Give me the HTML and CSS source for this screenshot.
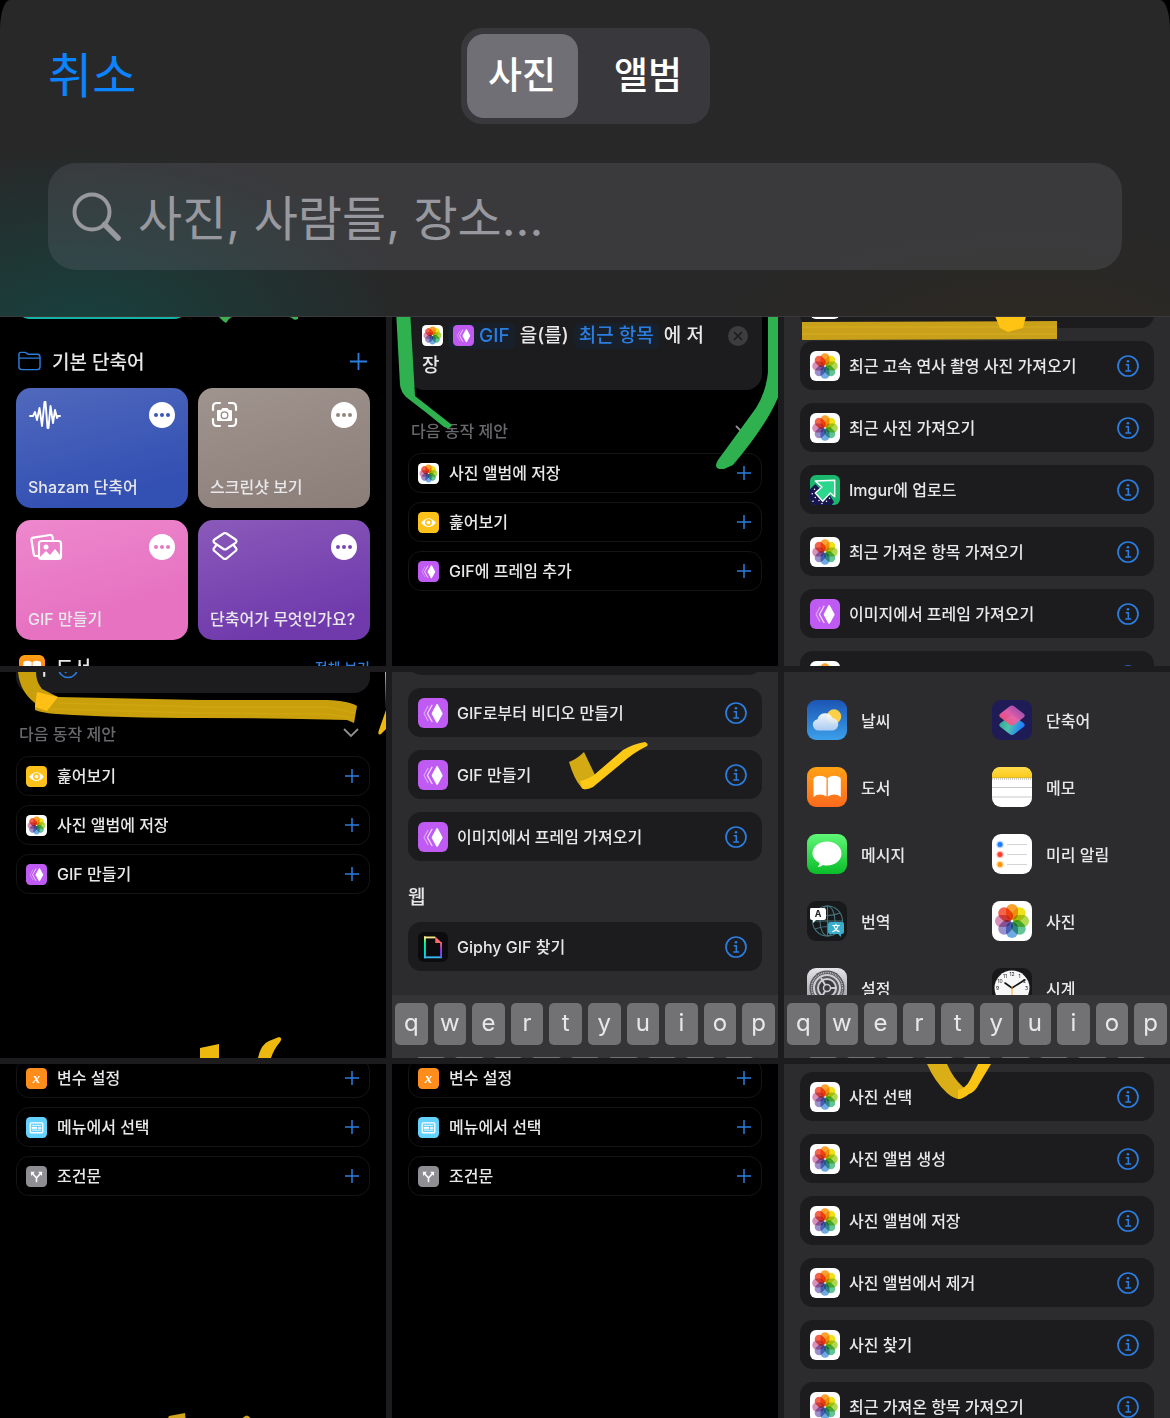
FILE: index.html
```
<!DOCTYPE html>
<html lang="ko">
<head>
    <meta charset="UTF-8">
    <meta name="viewport" content="width=device-width, initial-scale=1.0">
    <title>사진</title>
    <link rel="stylesheet" href="styles.css">
</head>
<body>

<!-- shared icons -->
<svg class="sprite" aria-hidden="true">
    <defs>
        <linearGradient id="g-sky" x2="0" y2="1"><stop stop-color="#1c55b4"/><stop offset="1" stop-color="#3ba0ea"/></linearGradient>
        <linearGradient id="g-cloud" x2="0" y2="1"><stop stop-color="#fff"/><stop offset="1" stop-color="#b4d0f2"/></linearGradient>
        <linearGradient id="g-book" x2="0" y2="1"><stop stop-color="#ffa114"/><stop offset="1" stop-color="#fb6a1e"/></linearGradient>
        <linearGradient id="g-msg" x2="0" y2="1"><stop stop-color="#5ff777"/><stop offset="1" stop-color="#0abc29"/></linearGradient>
        <linearGradient id="g-note" x2="0" y2="1"><stop stop-color="#ffdc4d"/><stop offset="1" stop-color="#fcc917"/></linearGradient>
        <linearGradient id="g-top" x1="0" y1="1" x2="1" y2="0"><stop stop-color="#ff4d5c"/><stop offset=".5" stop-color="#ee5fae"/><stop offset="1" stop-color="#7a4fb8"/></linearGradient>
        <linearGradient id="g-low" y2=".3"><stop stop-color="#2f9d96"/><stop offset=".5" stop-color="#4fc3ab"/><stop offset="1" stop-color="#1f7dff"/></linearGradient>
        <linearGradient id="g-set" x2="0" y2="1"><stop stop-color="#e4e4e9"/><stop offset="1" stop-color="#8e8e93"/></linearGradient>
        <linearGradient id="g-gl" x2="0" y2="1"><stop stop-color="#fff35c"/><stop offset=".3" stop-color="#00ff99"/><stop offset="1" stop-color="#00ccff"/></linearGradient>
        <linearGradient id="g-gr" x2="0" y2="1"><stop stop-color="#ff6666"/><stop offset=".5" stop-color="#9933ff"/><stop offset="1" stop-color="#6157ff"/></linearGradient>
    </defs>

    <symbol id="i-photos" viewBox="0 0 40 40">
        <rect width="40" height="40" rx="8" fill="#fff"/>
        <g class="petals">
            <rect x="14" y="3" width="12" height="16" rx="6" fill="#fba12e"/>
            <rect x="14" y="3" width="12" height="16" rx="6" fill="#f0e11c" transform="rotate(45 20 20)"/>
            <rect x="14" y="3" width="12" height="16" rx="6" fill="#b0d951" transform="rotate(90 20 20)"/>
            <rect x="14" y="3" width="12" height="16" rx="6" fill="#63c595" transform="rotate(135 20 20)"/>
            <rect x="14" y="3" width="12" height="16" rx="6" fill="#70aae2" transform="rotate(180 20 20)"/>
            <rect x="14" y="3" width="12" height="16" rx="6" fill="#9c8fcb" transform="rotate(225 20 20)"/>
            <rect x="14" y="3" width="12" height="16" rx="6" fill="#d890ba" transform="rotate(270 20 20)"/>
            <rect x="14" y="3" width="12" height="16" rx="6" fill="#f2644c" transform="rotate(315 20 20)"/>
        </g>
    </symbol>
    <symbol id="i-gif" viewBox="0 0 40 40">
        <rect width="40" height="40" rx="8" fill="#bf5af2"/>
        <path d="M24.500 8.500q1-.8 2 0l6 11q.5 1 0 2l-6 11q-1 .8-2 0l-6-11q-.5-1 0-2z" fill="#fff"/>
        <path d="M19 9l-6.500 11.500L19 32" fill="none" stroke="#fff" stroke-opacity=".75" stroke-width="1.800"/>
        <path d="M13.500 10.500L8 20.500l5.500 10" fill="none" stroke="#fff" stroke-opacity=".45" stroke-width="1.500"/>
    </symbol>
    <symbol id="i-eye" viewBox="0 0 40 40">
        <rect width="40" height="40" rx="8" fill="#ffc21a"/>
        <path d="M6 20.500Q20 3 34 20.500 20 37 6 20.500z" fill="#fff"/>
        <circle cx="20" cy="20" r="6.500" fill="#ffc21a"/>
        <circle cx="20" cy="20" r="3.500" fill="#fff"/>
    </symbol>
    <symbol id="i-var" viewBox="0 0 40 40">
        <rect width="40" height="40" rx="8" fill="#ff8d1c"/>
        <text x="20" y="29" class="icon-serif">x</text>
    </symbol>
    <symbol id="i-menu" viewBox="0 0 40 40">
        <rect width="40" height="40" rx="8" fill="#64d2ff"/>
        <rect x="8" y="11" width="24" height="19" rx="2" fill="none" stroke="#fff" stroke-width="2.400"/>
        <path d="M11 16h18M11 25h18" stroke="#fff" stroke-width="1.500"/>
        <rect x="11" y="19" width="10" height="3.500" fill="#fff"/>
        <path d="M23 21h6" stroke="#fff" stroke-width="3"/>
    </symbol>
    <symbol id="i-branch" viewBox="0 0 40 40">
        <rect width="40" height="40" rx="8" fill="#8e8e93"/>
        <path d="M20 31V23L12 14M20 23l8-9" fill="none" stroke="#fff" stroke-width="3"/>
        <path d="M9 11l8 0-7 8zM31 11l-8 0 7 8z" fill="#fff"/>
    </symbol>
    <symbol id="i-imgur" viewBox="0 0 40 40">
        <rect width="40" height="40" rx="8" fill="#1bb76e"/>
        <path d="M0 19l7-7 10 10 10 6 5 8-3 4H8q-8 0-8-8z" fill="#17164f"/>
        <g fill="#fff"><circle cx="6" cy="19" r="1"/><circle cx="3" cy="25" r="1"/><circle cx="7" cy="30" r="1"/><circle cx="4" cy="35" r="1"/><circle cx="12" cy="34" r="1"/><circle cx="16" cy="38" r="1"/><circle cx="22" cy="35" r="1"/><circle cx="26" cy="31" r="1"/></g>
        <path d="M7 8l26-1v22l-6-5-10 11L7 24l9-8z" fill="#2bd68d" stroke="#fff" stroke-width="1.800" stroke-linejoin="round"/>
    </symbol>
    <symbol id="i-giphy" viewBox="0 0 40 40">
        <rect width="40" height="40" rx="8" fill="#0c0c0e"/>
        <rect x="8" y="6" width="2.500" height="29" fill="url(#g-gl)"/>
        <rect x="8" y="6" width="15" height="2.500" fill="#f5e98a"/>
        <rect x="8" y="32.500" width="24" height="2.500" fill="#35b8f0"/>
        <rect x="29.500" y="14" width="2.500" height="20" fill="url(#g-gr)"/>
        <path d="M23 6l9 8.500h-9z" fill="#ff6b6b"/>
    </symbol>
    <symbol id="i-weather" viewBox="0 0 40 40">
        <rect width="40" height="40" rx="9" fill="url(#g-sky)"/>
        <circle cx="27" cy="16.500" r="7.200" fill="#fdd04a"/>
        <path d="M11.500 30.500a5.700 5.700 0 0 1-1-11.300 8 8 0 0 1 15-1.200 6.300 6.300 0 0 1 .5 12.500z" fill="url(#g-cloud)" fill-opacity=".93"/>
    </symbol>
    <symbol id="i-shortcuts" viewBox="0 0 40 40">
        <rect width="40" height="40" rx="9" fill="#1e1b57"/>
        <path d="M17.500 16.500q2.500-2 5 0l9 6.500q2.500 2 0 4l-9 7q-2.500 2-5 0l-9-7q-2.500-2 0-4z" fill="url(#g-low)"/>
        <path d="M17.500 6.500q2.500-2 5 0l9 7q2.500 2 0 4l-9 7q-2.500 2-5 0l-9-7q-2.500-2 0-4z" fill="url(#g-top)" fill-opacity=".93"/>
    </symbol>
    <symbol id="i-books" viewBox="0 0 40 40">
        <rect width="40" height="40" rx="9" fill="url(#g-book)"/>
        <path d="M19.500 29.500Q12.500 25.500 6.500 30V12q0-2 2.500-2.500 6-2 10.500 1.500zM20.800 29.500q7-4 13 .5V12q0-2-2.500-2.500-6-2-10.500 1.500z" fill="#fff"/>
    </symbol>
    <symbol id="i-notes" viewBox="0 0 40 40">
        <rect width="40" height="40" rx="9" fill="#fff"/>
        <path d="M0 11V9q0-9 9-9h22q9 0 9 9v2z" fill="url(#g-note)"/>
        <path d="M0 12h40" stroke="#a9a59a" stroke-width="1.200" stroke-dasharray="1 1"/>
        <path d="M0 10.800h40" stroke="#c0a35a" stroke-width=".6"/>
        <path d="M0 20.500h40M0 30h40" stroke="#c9c9cb" stroke-width="1"/>
    </symbol>
    <symbol id="i-messages" viewBox="0 0 40 40">
        <rect width="40" height="40" rx="9" fill="url(#g-msg)"/>
        <path d="M20 7.500c8.300 0 14.500 5.300 14.500 12s-6.200 12-14.500 12q-2 0-4-.5-2.500 2-5.500 2 2-1.500 2-4c-4-2.200-7-5.500-7-9.500 0-6.700 6.200-12 14.500-12z" fill="#fff"/>
    </symbol>
    <symbol id="i-reminders" viewBox="0 0 40 40">
        <rect width="40" height="40" rx="9" fill="#fff"/>
        <g fill-opacity=".3"><circle cx="8" cy="10.500" r="3.800" fill="#1c7cff"/><circle cx="8" cy="20.500" r="3.800" fill="#ff3b30"/><circle cx="8" cy="30.500" r="3.800" fill="#ff9500"/></g>
        <circle cx="8" cy="10.500" r="2.500" fill="#1c7cff"/><circle cx="8" cy="20.500" r="2.500" fill="#ff3b30"/><circle cx="8" cy="30.500" r="2.500" fill="#ff9500"/>
        <path d="M15 10.500h20M15 20.500h20M15 30.500h20" stroke="#d4d4d7" stroke-width="1.200"/>
    </symbol>
    <symbol id="i-translate" viewBox="0 0 40 40">
        <rect width="40" height="40" rx="9" fill="#18191b"/>
        <g fill="none" stroke="#47747e" stroke-width="1.100">
            <circle cx="20.500" cy="20" r="15"/><ellipse cx="20.500" cy="20" rx="7.500" ry="15"/>
            <path d="M20.500 5v30M5.500 20h30M8 12q12.500 5 25 0M8 28q12.500-5 25 0"/>
        </g>
        <path d="M4 7h13q2 0 2 2v8q0 2-2 2H9l-3 3v-3H5q-2 0-2-2V9q0-2 1-2z" fill="#fff"/>
        <text x="11" y="16" class="icon-latin">A</text>
        <path d="M23 21h12q2 0 2 2v8q0 2-2 2h-1v3l-3-3h-8q-2 0-2-2v-8q0-2 2-2z" fill="#39aecb"/>
        <text x="29" y="30" class="icon-hanja">文</text>
    </symbol>
    <symbol id="i-settings" viewBox="0 0 40 40">
        <rect width="40" height="40" rx="9" fill="url(#g-set)"/>
        <circle cx="20" cy="20" r="17.500" fill="#56565b"/>
        <circle cx="20" cy="20" r="15.500" fill="none" stroke="#c0c0c6" stroke-width="1.500" stroke-dasharray="1 .8"/>
        <circle cx="20" cy="20" r="13" fill="none" stroke="#cdcdd3" stroke-width="2"/>
        <circle cx="20" cy="20" r="9" fill="#3a3a3e" stroke="#cdcdd3" stroke-width="2"/>
        <path d="M20 20h10M20 20l-6-10M20 20l-6 10" stroke="#cdcdd3" stroke-width="2"/>
        <circle cx="20" cy="20" r="3.500" fill="#3a3a3e" stroke="#cdcdd3" stroke-width="1.500"/>
    </symbol>
    <symbol id="i-clock" viewBox="0 0 40 40">
        <rect width="40" height="40" rx="9" fill="#18181a"/>
        <circle cx="20" cy="20" r="17.500" fill="#f7f7f7"/>
        <g class="icon-digits">
            <text x="20" y="7.500">12</text><text x="27.500" y="9.500">1</text><text x="32.500" y="15">2</text><text x="34.500" y="22">3</text>
            <text x="13" y="9.500">11</text><text x="8" y="15">10</text><text x="5.500" y="22">9</text>
        </g>
        <path d="M13 15l7 5 12.500-8" fill="none" stroke="#111" stroke-width="1.600" stroke-linecap="round"/>
        <path d="M20 18v16" stroke="#ff9f0a" stroke-width=".9"/>
    </symbol>
    <symbol id="i-info" viewBox="0 0 22 22">
        <circle cx="11" cy="11" r="10" fill="none" stroke="#2b7de0" stroke-width="1.700"/>
        <circle cx="11" cy="6.200" r="1.300" fill="#2b7de0"/>
        <path d="M8.700 9.800h2.600v6M8.300 16h5.800" fill="none" stroke="#2b7de0" stroke-width="1.500"/>
    </symbol>
    <symbol id="i-plus" viewBox="0 0 14 14">
        <path d="M7 0v14M0 7h14" stroke="#2b7de0" stroke-width="1.500"/>
    </symbol>
    <symbol id="i-chevron" viewBox="0 0 16 10">
        <path d="M1 1l7 7 7-7" fill="none" stroke="#8e8e93" stroke-width="1.800"/>
    </symbol>
    <symbol id="i-more" viewBox="0 0 26 26">
        <circle cx="13" cy="13" r="13" fill="#fff"/>
        <g fill="currentColor"><circle cx="7" cy="13" r="2"/><circle cx="13" cy="13" r="2"/><circle cx="19" cy="13" r="2"/></g>
    </symbol>
</svg>

<header class="picker-header">
    <div class="toolbar">
        <button class="cancel">취소</button>
        <div class="segmented">
            <input type="radio" name="view" id="view-photos" checked>
            <label for="view-photos">사진</label>
            <input type="radio" name="view" id="view-albums">
            <label for="view-albums">앨범</label>
        </div>
    </div>
    <div class="search">
        <svg class="search-icon" viewBox="0 0 50 50" aria-hidden="true">
            <circle cx="20" cy="20" r="17.500" fill="none" stroke="#98989f" stroke-width="4"/>
            <path d="M32.500 32.500L46 46" stroke="#98989f" stroke-width="5.500" stroke-linecap="round"/>
        </svg>
        <input type="search" aria-label="사진, 사람들, 장소..." placeholder="사진, 사람들, 장소...">
    </div>
</header>

<main class="gallery">

    <section class="tile">
        <div class="shortcut-cut"></div>
        <div class="folder">
            <svg class="folder-icon" viewBox="0 0 24 20"><path d="M1 5V3q0-2 2-2h4q1 0 2 1t2 1h9q3 0 3 3v10q0 3-3 3H4q-3 0-3-3zM1 7h22" fill="none" stroke="#2b7de0" stroke-width="1.500"/></svg>
            <h2>기본 단축어</h2>
            <button class="icon-button" aria-label="추가"><svg class="plus-large"><use href="#i-plus"/></svg></button>
        </div>
        <div class="shortcuts">
            <div class="shortcut blue">
                <div class="shortcut-top">
                    <svg class="glyph" viewBox="0 0 32 30"><path d="M2 16h3l2-4 2 8 2.500-12 2.500 18L16.500 2l1 0 2 26 1 0L22.500 6l2.500 17 2-13 2 8 1-2h2" fill="none" stroke="#fff" stroke-width="1.900" stroke-linejoin="round" stroke-linecap="round"/></svg>
                    <button class="icon-button" aria-label="더 보기"><svg class="more"><use href="#i-more"/></svg></button>
                </div>
                <span>Shazam 단축어</span>
            </div>
            <div class="shortcut taupe">
                <div class="shortcut-top">
                    <svg class="glyph" viewBox="0 0 32 30"><path d="M3 10V7q0-4 4-4h3M19 3h3q4 0 4 4v3M26 19v3q0 4-4 4h-3M10 26H7q-4 0-4-4v-3" fill="none" stroke="#fff" stroke-width="2.200" stroke-linecap="round"/><path d="M9 10h2l1.500-2h5L19 10h2q1 0 1 1v9q0 1-1 1H8q-1 0-1-1v-9q0-1 1-1z" fill="#fff"/><circle cx="14.500" cy="15.200" r="3.300" fill="none" stroke="#968984" stroke-width="1.300"/></svg>
                    <button class="icon-button" aria-label="더 보기"><svg class="more"><use href="#i-more"/></svg></button>
                </div>
                <span>스크린샷 보기</span>
            </div>
            <div class="shortcut pink">
                <div class="shortcut-top">
                    <svg class="glyph" viewBox="0 0 32 30"><path d="M10 24H8q-2 0-2.300-2L3.500 8q-.3-2 1.700-2.400L22 3q2-.3 2.500 1.700l.5 3" fill="none" stroke="#fff" stroke-width="2.200"/><rect x="11" y="9" width="22" height="18" rx="2.500" fill="none" stroke="#fff" stroke-width="2.200"/><circle cx="18" cy="15" r="2.500" fill="#fff"/><path d="M12 25l6-6 4 4 5-6 5 6v3H12z" fill="#fff"/></svg>
                    <button class="icon-button" aria-label="더 보기"><svg class="more"><use href="#i-more"/></svg></button>
                </div>
                <span>GIF 만들기</span>
            </div>
            <div class="shortcut violet">
                <div class="shortcut-top">
                    <svg class="glyph" viewBox="0 0 32 30"><g fill="none" stroke="#fff" stroke-width="2.200"><path d="M13.500 1.500q1.500-1 3 0l9 6q2 1.500 0 3.500l-9 6q-1.500 1-3 0l-9-6q-2-2 0-3.500z"/><path d="M6.500 13l-2 2.500q-2 2 0 3.500l9 7.500q1.500 1 3 0l9-7.500q2-1.500 0-3.500l-2-2.500"/></g></svg>
                    <button class="icon-button" aria-label="더 보기"><svg class="more"><use href="#i-more"/></svg></button>
                </div>
                <span>단축어가 무엇인가요?</span>
            </div>
        </div>
        <div class="app-section">
            <svg class="book"><use href="#i-books"/></svg>
            <h2>도서</h2>
            <a href="#">전체 보기</a>
        </div>
        <svg class="marks" viewBox="0 0 386 386"><path d="M219 30h13v7l-3 2-3 4-3-2-4-4zM287 30h11v9q-4 2-6-1l-5-2z" fill="#3fae53"/></svg>
    </section>

    <section class="tile">
        <div class="action">
            <p>
                <svg class="icon-small"><use href="#i-photos"/></svg>
                <span class="token"><svg class="icon-small"><use href="#i-gif"/></svg>GIF</span>
                을(를)
                <span class="token">최근 항목</span>
                에 저장
            </p>
            <button class="icon-button close" aria-label="삭제"><svg viewBox="0 0 20 20"><circle cx="10" cy="10" r="10" fill="#3d3d40"/><path d="M6 6l8 8M14 6l-8 8" stroke="#1c1c1e" stroke-width="1.600"/></svg></button>
        </div>
        <div class="suggest-head"><h3>다음 동작 제안</h3><svg class="chevron"><use href="#i-chevron"/></svg></div>
        <ul class="suggestions">
            <li><svg class="icon-small"><use href="#i-photos"/></svg><span>사진 앨범에 저장</span><button class="icon-button" aria-label="추가"><svg class="plus"><use href="#i-plus"/></svg></button></li>
            <li><svg class="icon-small"><use href="#i-eye"/></svg><span>훑어보기</span><button class="icon-button" aria-label="추가"><svg class="plus"><use href="#i-plus"/></svg></button></li>
            <li><svg class="icon-small"><use href="#i-gif"/></svg><span>GIF에 프레임 추가</span><button class="icon-button" aria-label="추가"><svg class="plus"><use href="#i-plus"/></svg></button></li>
        </ul>
        <svg class="marks" viewBox="0 0 386 386">
            <path d="M4 30L8 105q1 7 6 12l22 17 16 13q6 3 8-2L23 116 18 30zM376 30v62q-2 20-12 36-16 22-38 52-6 10 6 9l9-4q34-40 46-70V30z" fill="#2fb14f"/>
        </svg>
    </section>

    <section class="tile gray">
        <ul class="actions from-above">
            <li><svg class="icon"><use href="#i-photos"/></svg><span></span><button class="icon-button" aria-label="정보"><svg class="info"><use href="#i-info"/></svg></button></li>
            <li><svg class="icon"><use href="#i-photos"/></svg><span>최근 고속 연사 촬영 사진 가져오기</span><button class="icon-button" aria-label="정보"><svg class="info"><use href="#i-info"/></svg></button></li>
            <li><svg class="icon"><use href="#i-photos"/></svg><span>최근 사진 가져오기</span><button class="icon-button" aria-label="정보"><svg class="info"><use href="#i-info"/></svg></button></li>
            <li><svg class="icon"><use href="#i-imgur"/></svg><span>Imgur에 업로드</span><button class="icon-button" aria-label="정보"><svg class="info"><use href="#i-info"/></svg></button></li>
            <li><svg class="icon"><use href="#i-photos"/></svg><span>최근 가져온 항목 가져오기</span><button class="icon-button" aria-label="정보"><svg class="info"><use href="#i-info"/></svg></button></li>
            <li><svg class="icon"><use href="#i-gif"/></svg><span>이미지에서 프레임 가져오기</span><button class="icon-button" aria-label="정보"><svg class="info"><use href="#i-info"/></svg></button></li>
            <li><svg class="icon"><use href="#i-photos"/></svg><span></span><button class="icon-button" aria-label="정보"><svg class="info"><use href="#i-info"/></svg></button></li>
        </ul>
        <svg class="marks" viewBox="0 0 386 386">
            <path d="M18 42l255-1v18l-255 1z" fill="#c9a01a"/>
            <path d="M18 47h255M18 54h255" stroke="#d0a61c" stroke-width="2"/>
            <path d="M211 36h31l-3 12-15 4-8-4z" fill="#ffc314"/>
        </svg>
    </section>

    <section class="tile">
        <div class="action cut">
            <p>기<svg class="arrow-circle" viewBox="0 0 22 22"><circle cx="11" cy="11" r="9.500" fill="none" stroke="#2b7de0" stroke-width="1.600"/><path d="M8 16l5-5-5-5" fill="none" stroke="#2b7de0" stroke-width="1.600"/></svg></p>
        </div>
        <div class="suggest-head"><h3>다음 동작 제안</h3><svg class="chevron"><use href="#i-chevron"/></svg></div>
        <ul class="suggestions">
            <li><svg class="icon-small"><use href="#i-eye"/></svg><span>훑어보기</span><button class="icon-button" aria-label="추가"><svg class="plus"><use href="#i-plus"/></svg></button></li>
            <li><svg class="icon-small"><use href="#i-photos"/></svg><span>사진 앨범에 저장</span><button class="icon-button" aria-label="추가"><svg class="plus"><use href="#i-plus"/></svg></button></li>
            <li><svg class="icon-small"><use href="#i-gif"/></svg><span>GIF 만들기</span><button class="icon-button" aria-label="추가"><svg class="plus"><use href="#i-plus"/></svg></button></li>
        </ul>
        <svg class="marks" viewBox="0 0 386 386">
            <path d="M18 0h18q0 10 6 17l16 8 142 3h127q22 1 30 6l-3 17-7-3q-70-2-147-2-80 0-143-4-14-1-22-4v-7Q20 20 18 0z" fill="#c99f0c"/>
            <path d="M58 31l142 4h127l28 6M50 37l150 4 127 1 26 4" fill="none" stroke="#d0a610" stroke-width="1.500"/>
            <path d="M37 20l21 5-11 14-12-4z" fill="#ffbf14"/>
            <path d="M387 0h-2l1 38-7 20q-2 6 2 4l6-6zM200 376l19-4v14h-19zM258 386q3-14 11-17l10-4q4 1 1 5-6 7-9 16z" fill="#eeb90f"/>
        </svg>
    </section>

    <section class="tile gray">
        <ul class="actions edge">
            <li></li>
            <li><svg class="icon"><use href="#i-gif"/></svg><span>GIF로부터 비디오 만들기</span><button class="icon-button" aria-label="정보"><svg class="info"><use href="#i-info"/></svg></button></li>
            <li><svg class="icon"><use href="#i-gif"/></svg><span>GIF 만들기</span><button class="icon-button" aria-label="정보"><svg class="info"><use href="#i-info"/></svg></button></li>
            <li><svg class="icon"><use href="#i-gif"/></svg><span>이미지에서 프레임 가져오기</span><button class="icon-button" aria-label="정보"><svg class="info"><use href="#i-info"/></svg></button></li>
        </ul>
        <h3 class="group-title">웹</h3>
        <ul class="actions">
            <li><svg class="icon"><use href="#i-giphy"/></svg><span>Giphy GIF 찾기</span><button class="icon-button" aria-label="정보"><svg class="info"><use href="#i-info"/></svg></button></li>
        </ul>
        <svg class="marks" viewBox="0 0 386 386">
            <path d="M177 90q8-3 15-10l11 23-2 10-7 4q-3 1-5-2-7-8-12-25z" fill="#d3aa14"/>
            <path d="M188 109q6-1 14-6l29-25q10-6 22-8 4 2 2 4-14 7-25 17l-29 24q-8 4-11 1z" fill="#fbc916"/>
        </svg>
        <div class="keyboard">
            <div class="keys"><button>q</button><button>w</button><button>e</button><button>r</button><button>t</button><button>y</button><button>u</button><button>i</button><button>o</button><button>p</button></div>
            <div class="keys inset"><i></i><i></i><i></i><i></i><i></i><i></i><i></i><i></i><i></i></div>
        </div>
    </section>

    <section class="tile gray">
        <div class="apps">
            <button><svg><use href="#i-weather"/></svg>날씨</button>
            <button><svg><use href="#i-shortcuts"/></svg>단축어</button>
            <button><svg><use href="#i-books"/></svg>도서</button>
            <button><svg><use href="#i-notes"/></svg>메모</button>
            <button><svg><use href="#i-messages"/></svg>메시지</button>
            <button><svg><use href="#i-reminders"/></svg>미리 알림</button>
            <button><svg><use href="#i-translate"/></svg>번역</button>
            <button><svg><use href="#i-photos"/></svg>사진</button>
            <button><svg><use href="#i-settings"/></svg>설정</button>
            <button><svg><use href="#i-clock"/></svg>시계</button>
        </div>
        <div class="keyboard">
            <div class="keys"><button>q</button><button>w</button><button>e</button><button>r</button><button>t</button><button>y</button><button>u</button><button>i</button><button>o</button><button>p</button></div>
            <div class="keys inset"><i></i><i></i><i></i><i></i><i></i><i></i><i></i><i></i><i></i></div>
        </div>
    </section>

    <section class="tile">
        <ul class="suggestions cut">
            <li><svg class="icon-small"><use href="#i-var"/></svg><span>변수 설정</span><button class="icon-button" aria-label="추가"><svg class="plus"><use href="#i-plus"/></svg></button></li>
            <li><svg class="icon-small"><use href="#i-menu"/></svg><span>메뉴에서 선택</span><button class="icon-button" aria-label="추가"><svg class="plus"><use href="#i-plus"/></svg></button></li>
            <li><svg class="icon-small"><use href="#i-branch"/></svg><span>조건문</span><button class="icon-button" aria-label="추가"><svg class="plus"><use href="#i-plus"/></svg></button></li>
        </ul>
        <svg class="marks" viewBox="0 0 386 386"><path d="M168 354l1-2 16-3 1 10h-18zM242 355q5-7 9 0v5h-9z" fill="#cfa41a"/></svg>
    </section>

    <section class="tile">
        <ul class="suggestions cut">
            <li><svg class="icon-small"><use href="#i-var"/></svg><span>변수 설정</span><button class="icon-button" aria-label="추가"><svg class="plus"><use href="#i-plus"/></svg></button></li>
            <li><svg class="icon-small"><use href="#i-menu"/></svg><span>메뉴에서 선택</span><button class="icon-button" aria-label="추가"><svg class="plus"><use href="#i-plus"/></svg></button></li>
            <li><svg class="icon-small"><use href="#i-branch"/></svg><span>조건문</span><button class="icon-button" aria-label="추가"><svg class="plus"><use href="#i-plus"/></svg></button></li>
        </ul>
    </section>

    <section class="tile gray">
        <ul class="actions spaced">
            <li><svg class="icon"><use href="#i-photos"/></svg><span>사진 선택</span><button class="icon-button" aria-label="정보"><svg class="info"><use href="#i-info"/></svg></button></li>
            <li><svg class="icon"><use href="#i-photos"/></svg><span>사진 앨범 생성</span><button class="icon-button" aria-label="정보"><svg class="info"><use href="#i-info"/></svg></button></li>
            <li><svg class="icon"><use href="#i-photos"/></svg><span>사진 앨범에 저장</span><button class="icon-button" aria-label="정보"><svg class="info"><use href="#i-info"/></svg></button></li>
            <li><svg class="icon"><use href="#i-photos"/></svg><span>사진 앨범에서 제거</span><button class="icon-button" aria-label="정보"><svg class="info"><use href="#i-info"/></svg></button></li>
            <li><svg class="icon"><use href="#i-photos"/></svg><span>사진 찾기</span><button class="icon-button" aria-label="정보"><svg class="info"><use href="#i-info"/></svg></button></li>
            <li><svg class="icon"><use href="#i-photos"/></svg><span>최근 가져온 항목 가져오기</span><button class="icon-button" aria-label="정보"><svg class="info"><use href="#i-info"/></svg></button></li>
        </ul>
        <svg class="marks" viewBox="0 0 386 386">
            <path d="M143 0h20q6 14 16 23l8 5-11 7q-6 0-13-6-12-11-20-29z" fill="#d9ae16"/>
            <path d="M174 26q8-2 12-10l8-16h13l-12 20q-4 8-10 10-6 5-11 5z" fill="#fbc414"/>
        </svg>
    </section>

</main>

</body>
</html>
```
FILE: styles.css
```
* {
    box-sizing: border-box;
}
body {
    font-family: Inter, "Noto Sans CJK KR", sans-serif;
    font-size: 16px;
    font-weight: 500;
    display: flex;
    flex-direction: column;
    height: 100vh;
    margin: 0;
    overflow: hidden;
    background-color: #000;
    color: #e8e8ea;
}
button {
    font: inherit;
    color: inherit;
    padding: 0;
    border: none;
    background: none;
    cursor: pointer;
}
h2, h3, p, ul {
    margin: 0;
    padding: 0;
    list-style: none;
    font-weight: 500;
}
svg {
    display: block;
    flex-shrink: 0;
}
.sprite {
    position: absolute;
    width: 0;
    height: 0;
}
.petals rect {
    mix-blend-mode: multiply;
}
.icon-serif {
    font: italic bold 28px "Liberation Serif", serif;
    text-anchor: middle;
    fill: #fff;
}
.icon-latin {
    font: bold 9px Inter, sans-serif;
    text-anchor: middle;
    fill: #222;
}
.icon-hanja {
    font: bold 8px "Noto Sans CJK KR", sans-serif;
    text-anchor: middle;
    fill: #fff;
}
.icon-digits {
    font: 5px Inter, sans-serif;
    text-anchor: middle;
    fill: #222;
}

/* header */
.picker-header {
    position: relative;
    z-index: 1;
    flex-shrink: 0;
    padding: 28px 48px 46px;
    border-bottom: 1px solid #3a3a3c;
    border-radius: 10px 10px 0 0 / 30px 30px 0 0;
    background:
        radial-gradient(ellipse 330px 190px at 80px 335px, rgba(16, 76, 72, 0.7), rgba(16, 76, 72, 0)),
        radial-gradient(ellipse 320px 110px at 88% 330px, rgba(60, 45, 20, 0.25), rgba(60, 45, 20, 0)),
        #282828;
}
.toolbar {
    display: grid;
    grid-template-columns: 1fr auto 1fr;
    align-items: center;
    margin-bottom: 39px;
}
.cancel {
    justify-self: start;
    font-size: 48px;
    line-height: 64px;
    font-weight: 400;
    color: #0a84ff;
}
.segmented {
    display: flex;
    gap: 15px;
    padding: 6px;
    border-radius: 21px;
    background: #39393d;
}
.segmented input {
    position: absolute;
    opacity: 0;
}
.segmented label {
    width: 111px;
    border-radius: 17px;
    font-size: 37px;
    line-height: 84px;
    text-align: center;
    color: #fff;
}
.segmented input:checked + label {
    background: #6f6f75;
}
.search {
    display: flex;
    align-items: center;
    gap: 16px;
    height: 107px;
    padding: 0 24px;
    border-radius: 28px;
    background: rgba(118, 118, 128, 0.24);
}
.search-icon {
    width: 50px;
    height: 50px;
}
.search input {
    flex: 1;
    min-width: 0;
    padding: 4px 0 0;
    border: none;
    outline: none;
    background: none;
    font: inherit;
    font-size: 48px;
    font-weight: 400;
    color: #fff;
}
.search input::placeholder {
    color: #98989f;
}

/* gallery, first row is scrolled under the header */
.gallery {
    display: grid;
    grid-template-columns: repeat(3, 1fr);
    gap: 6px;
    margin-top: -37px;
    background: #1c1c1e;
}
.tile {
    position: relative;
    aspect-ratio: 1;
    min-height: 0;
    overflow: hidden;
    padding: 0 16px;
    background: #000;
}
.gray {
    background: #2c2c2e;
}
.marks {
    position: absolute;
    top: 0;
    left: 0;
    width: 100%;
    pointer-events: none;
}
.icon-button {
    display: block;
}
.icon {
    width: 30px;
    height: 30px;
}
.icon-small {
    width: 21px;
    height: 21px;
}
.info {
    width: 22px;
    height: 22px;
}
.plus {
    width: 14px;
    height: 14px;
}
.plus-large {
    width: 17px;
    height: 17px;
}
.chevron {
    width: 16px;
    height: 10px;
}

/* shortcut cards */
.shortcut-cut {
    width: 172px;
    height: 39px;
    border-radius: 14px;
    background: #12b5a5;
}
.folder {
    display: flex;
    align-items: center;
    height: 54px;
    margin-top: 15px;
    padding: 0 3px 0 2px;
}
.folder-icon {
    width: 23px;
    height: 20px;
}
.folder h2, .app-section h2 {
    flex: 1;
    margin-left: 11px;
    padding-bottom: 2px;
    font-size: 19px;
}
.shortcuts {
    display: grid;
    grid-template-columns: 1fr 1fr;
    gap: 12px 10px;
}
.shortcut {
    display: flex;
    flex-direction: column;
    justify-content: space-between;
    height: 120px;
    padding: 12px 13px 9px 12px;
    border-radius: 15px;
    line-height: 24px;
    white-space: nowrap;
}
.shortcut-top {
    display: flex;
    justify-content: space-between;
}
.glyph {
    width: 32px;
    height: 30px;
    overflow: visible;
}
.more {
    width: 26px;
    height: 26px;
}
.blue {
    background: linear-gradient(165deg, #5069bd, #3350b3 80%);
}
.blue .more {
    color: #3c56b5;
}
.taupe {
    background: linear-gradient(165deg, #a0948f, #8b7d77);
}
.taupe .more {
    color: #94867f;
}
.pink {
    background: linear-gradient(165deg, #ee88cd, #e672c1 70%);
}
.pink .more {
    color: #e679c4;
}
.violet {
    background: linear-gradient(165deg, #8a5aba, #703aac 80%);
}
.violet .more {
    color: #7a48b2;
}
.app-section {
    display: flex;
    align-items: center;
    margin-top: 13px;
    padding-left: 3px;
}
.app-section a {
    padding-bottom: 2px;
    font-size: 14px;
    text-decoration: none;
    color: #2b7de0;
}
.book {
    width: 26px;
    height: 26px;
}

/* action editor */
.action {
    display: flex;
    align-items: flex-start;
    justify-content: space-between;
    margin-top: 21px;
    padding: 20px 14px 9px;
    border-radius: 16px;
    background: #1c1c1e;
}
.action p {
    width: 290px;
    font-size: 19px;
    line-height: 30px;
}
.action svg {
    display: inline-block;
    vertical-align: -4px;
}
.action.cut {
    margin-top: -18px;
    padding-top: 0;
}
.token {
    display: inline-block;
    padding: 0 5px;
    border-radius: 6px;
    line-height: 26px;
    background: #18202c;
    color: #2b7de0;
}
.token svg {
    margin-right: 5px;
}
.close svg {
    width: 20px;
    height: 20px;
    margin-top: 5px;
}
.arrow-circle {
    width: 22px;
    height: 22px;
    margin-left: 10px;
}
.suggest-head {
    display: flex;
    align-items: center;
    justify-content: space-between;
    height: 63px;
    padding: 17px 11px 0 3px;
}
.suggest-head h3 {
    font-size: 16px;
    color: #68686d;
}
.suggestions {
    display: grid;
    gap: 9px;
}
.suggestions.cut {
    margin-top: -6px;
}
.suggestions li {
    display: flex;
    align-items: center;
    gap: 10px;
    height: 40px;
    padding: 0 10px 0 9px;
    border: 1px solid #141416;
    border-radius: 13px;
}
.suggestions span, .actions span {
    flex: 1;
    padding-bottom: 2px;
    white-space: nowrap;
}

/* action list */
.actions {
    display: grid;
    gap: 13px;
}
.actions li {
    display: flex;
    align-items: center;
    gap: 9px;
    height: 49px;
    padding: 0 15px 0 10px;
    border-radius: 13px;
    background: #1c1c1e;
}
.from-above {
    margin-top: -1px;
}
.edge {
    margin-top: -46px;
}
.spaced {
    margin-top: 8px;
}
.group-title {
    height: 61px;
    padding-top: 12px;
    font-size: 19px;
    line-height: 50px;
}

/* apps */
.apps {
    display: grid;
    grid-template-columns: 1fr 1fr;
    grid-auto-rows: 67px;
    margin: 14px -23px 0 7px;
}
.apps button {
    display: flex;
    align-items: center;
    gap: 14px;
}
.apps svg {
    width: 40px;
    height: 40px;
}

/* keyboard */
.keyboard {
    position: absolute;
    left: 0;
    right: 0;
    bottom: 0;
    height: 63px;
    padding: 8px 3px 0;
    overflow: hidden;
    background: #353537;
}
.keys {
    display: flex;
    gap: 6px;
}
.keys button, .keys i {
    flex: 1;
    height: 42px;
    padding-bottom: 3px;
    border-radius: 5px;
    background: #727274;
    font-size: 24px;
    font-weight: 400;
    line-height: 36px;
}
.keys.inset {
    padding: 0 20px;
    margin-top: 12px;
}
```
